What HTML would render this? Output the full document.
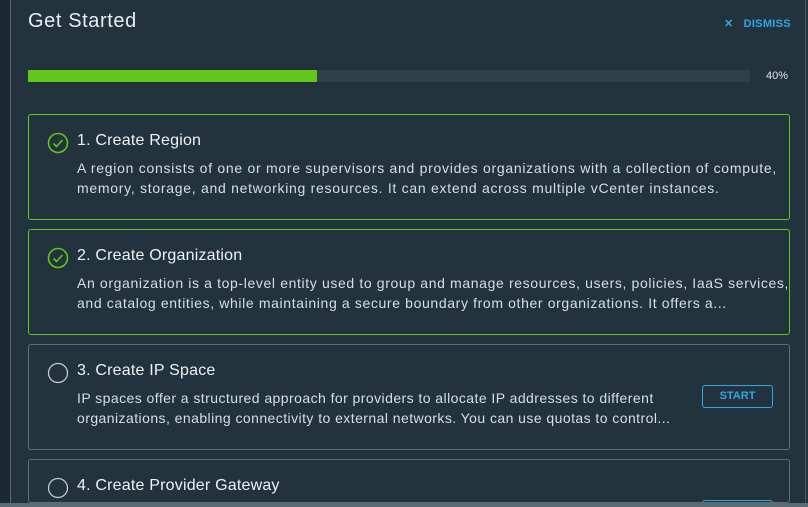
<!DOCTYPE html>
<html><head><meta charset="utf-8"><style>
*{margin:0;padding:0;box-sizing:border-box}
html,body{width:808px;height:507px;overflow:hidden}
body{background:#22333d;font-family:"Liberation Sans",sans-serif;position:relative}
.strip{position:absolute;left:0;top:0;width:11px;height:507px;background:#1b2931;border-right:1px solid #5a6b74}
.rb{position:absolute;right:2px;top:0;width:1px;height:507px;background:#4a5b64}
.bb{position:absolute;left:0;top:503px;width:808px;height:4px;background:#5a6b74;z-index:5}
h1{position:absolute;left:28px;top:10px;font-size:20px;font-weight:normal;color:#e9eef1;letter-spacing:.6px}
.dis{position:absolute;left:724px;top:17px;font-size:11px;font-weight:bold;color:#2ea8e6;letter-spacing:.3px}
.bar{position:absolute;left:28px;top:70px;width:722px;height:12px;background:#2e3f48}
.bar i{display:block;width:289px;height:12px;background:#62c71a}
.pct{position:absolute;left:766px;top:70px;font-size:11px;color:#dfe5e8}
.card{position:absolute;left:28px;width:762px;height:106px;border:1px solid #5c6e77;border-radius:3px;overflow:hidden}
.card.done{border-color:#62c71a}
.card svg{position:absolute;left:18px;top:17px}
.t{position:absolute;left:48px;top:17px;font-size:16px;color:#eef2f4;white-space:nowrap;letter-spacing:.2px}
.d{position:absolute;left:48px;top:43px;font-size:14px;line-height:20px;color:#d8dee2;white-space:nowrap;letter-spacing:.72px}
.btn{position:absolute;left:673px;top:40px;width:71px;height:23px;border:1px solid #2ea8e6;border-radius:3px;color:#2ea8e6;font-size:11px;font-weight:bold;text-align:center;line-height:21px}
</style></head><body>
<div class="strip"></div><div class="rb"></div>
<h1>Get Started</h1>
<div class="dis">✕&nbsp;&nbsp; DISMISS</div>
<div class="bar"><i></i></div>
<div class="pct">40%</div>

<div class="card done" style="top:114px">
<svg width="22" height="22" viewBox="0 0 22 22"><circle cx="11" cy="11" r="9.5" fill="none" stroke="#62c71a" stroke-width="1.6"/><path d="M6.5 11.5l3 3 6-6.5" fill="none" stroke="#62c71a" stroke-width="1.6"/></svg>
<div class="t">1. Create Region</div>
<div class="d">A region consists of one or more supervisors and provides organizations with a collection of compute,<br>memory, storage, and networking resources. It can extend across multiple vCenter instances.</div>
</div>

<div class="card done" style="top:229px">
<svg width="22" height="22" viewBox="0 0 22 22"><circle cx="11" cy="11" r="9.5" fill="none" stroke="#62c71a" stroke-width="1.6"/><path d="M6.5 11.5l3 3 6-6.5" fill="none" stroke="#62c71a" stroke-width="1.6"/></svg>
<div class="t">2. Create Organization</div>
<div class="d" style="letter-spacing:.63px">An organization is a top-level entity used to group and manage resources, users, policies, IaaS services,<br>and catalog entities, while maintaining a secure boundary from other organizations. It offers a...</div>
</div>

<div class="card" style="top:344px">
<svg width="22" height="22" viewBox="0 0 22 22"><circle cx="11" cy="11" r="9.5" fill="none" stroke="#c4cbcf" stroke-width="1.3"/></svg>
<div class="t">3. Create IP Space</div>
<div class="d" style="letter-spacing:.44px">IP spaces offer a structured approach for providers to allocate IP addresses to different<br>organizations, enabling connectivity to external networks. You can use quotas to control...</div>
<div class="btn">START</div>
</div>

<div class="card" style="top:459px;height:44px">
<svg width="22" height="22" viewBox="0 0 22 22"><circle cx="11" cy="11" r="9.5" fill="none" stroke="#c4cbcf" stroke-width="1.3"/></svg>
<div class="t">4. Create Provider Gateway</div>
<div class="btn">START</div>
</div>
<div class="bb"></div>
</body></html>
